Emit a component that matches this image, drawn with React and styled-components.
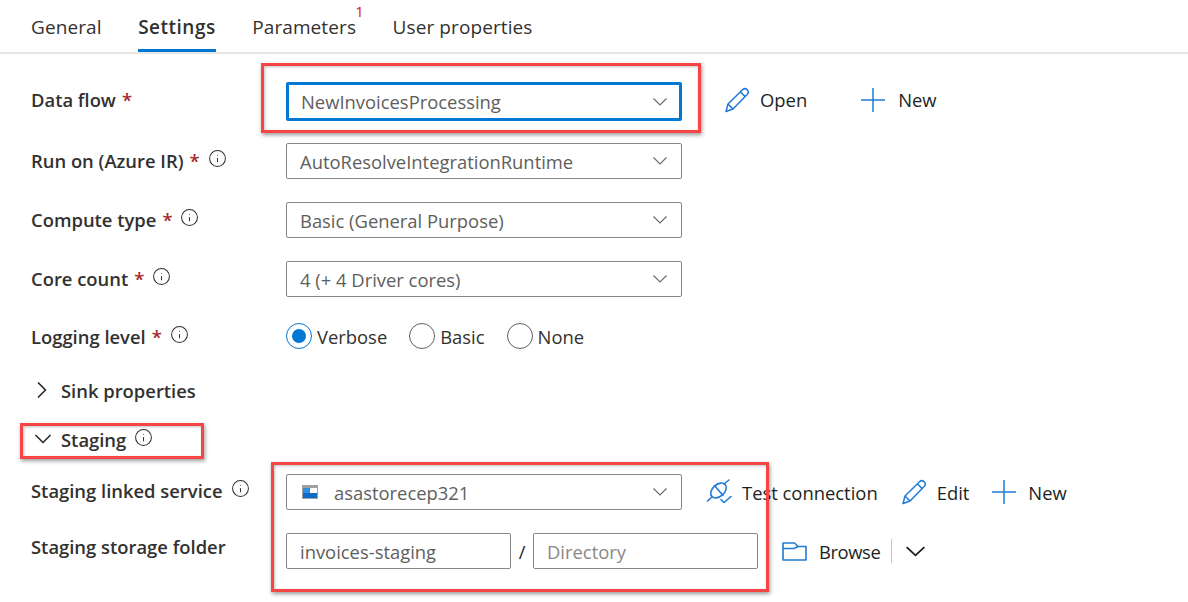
import React from 'react';
import styled, { createGlobalStyle } from 'styled-components';
import { Info } from 'lucide-react';

const GlobalStyle = createGlobalStyle`
    html, body { margin: 0; padding: 0; background: #fff; }
    body { font-family: "Open Sans", "Noto Sans", "Liberation Sans", sans-serif; }
`

const Page = styled.div`
    position: relative;
    width: 1188px;
    height: 602px;
    overflow: hidden;
    color: #323130;
    font-size: 18.4px;
`

const Tabs = styled.div`
    display: flex;
    padding-left: 31px;
    gap: 36.5px;
    border-bottom: 2px solid #e6e6e6;
    font-size: 19px;
`

const Tab = styled.div`
    position: relative;
    box-sizing: border-box;
    height: 52px;
    margin-bottom: ${props => props.active ? -1 : 0}px;
    line-height: 55px;
    font-weight: ${props => props.active ? 600 : 400};
    letter-spacing: ${props => props.active ? '0.5px' : '0.1px'};
    border-bottom: ${props => props.active ? '3px solid #0078d4' : 'none'};
`

const Badge = styled.span`
    position: absolute;
    top: -16px;
    right: -8px;
    font-size: 15px;
    color: #e00b1c;
`

const Form = styled.div`
    padding: 28px 0 0 31px;
`

const Row = styled.div`
    display: flex;
    align-items: center;
    height: ${props => props.h || 36}px;
    margin-bottom: ${props => props.mb ?? 23}px;
`

const Label = styled.div`
    display: flex;
    align-items: center;
    width: 255px;
    flex: none;
    font-weight: 600;
    margin-top: ${props => props.shift ?? -1}px;
`

const Star = styled.span`
    color: #a4262c;
    margin-left: 6px;
`

const InfoIcon = styled(Info)`
    width: 19px;
    height: 19px;
    margin: -4px 0 0 8px;
    color: #323130;
    stroke-width: 1.3;
`

const Select = styled.div`
    display: flex;
    align-items: center;
    box-sizing: border-box;
    width: 396px;
    height: ${props => props.focus ? 39 : 36}px;
    padding: 0 ${props => props.focus ? 12 : 14}px 0 ${props => props.focus ? 12 : 13}px;
    border: ${props => props.focus ? '3px solid #0078d4' : '1px solid #8a8886'};
    border-radius: 2px;
    color: #605e5c;
`

const SelectText = styled.span`
    flex: 1;
    margin-left: ${props => props.indent || 0}px;
`

const Actions = styled.div`
    display: flex;
    align-items: center;
    margin-left: ${props => props.ml || 42}px;
    margin-top: ${props => props.up || 0}px;
    gap: ${props => props.gap ?? 54}px;
`

const Action = styled.div`
    display: flex;
    align-items: center;
    gap: ${props => props.gap || 11}px;
    color: #201f1e;
`

const Radios = styled.div`
    display: flex;
    align-items: center;
    gap: 22px;
    margin-top: 1px;
`

const Radio = styled.div`
    display: flex;
    align-items: center;
    gap: 5px;
`

const Dot = styled.span`
    box-sizing: border-box;
    width: 26px;
    height: 26px;
    margin-top: -2px;
    border-radius: 50%;
    border: 1px solid ${props => props.on ? '#0078d4' : '#605e5c'};
    padding: 5px;
    background: ${props => props.on ? '#0078d4' : 'transparent'};
    background-clip: content-box;
`

const Section = styled.div`
    display: flex;
    align-items: center;
    height: 30px;
    margin-bottom: ${props => props.mb}px;
    font-weight: 600;
`

const SectionIcon = styled.span`
    display: flex;
    width: 30px;
    padding-left: ${props => props.pad || 0}px;
    box-sizing: border-box;
`

const Field = styled.div`
    box-sizing: border-box;
    display: flex;
    align-items: center;
    width: ${props => props.w}px;
    height: 36px;
    padding-left: 13px;
    border: 1px solid #8a8886;
    border-radius: 2px;
    color: ${props => props.muted ? '#8a8886' : '#605e5c'};
`

const Slash = styled.span`
    width: 22px;
    text-align: center;
    color: #201f1e;
`

const BrowseText = styled.span`
    letter-spacing: -0.4px;
`

const Divider = styled.span`
    width: 1px;
    height: 24px;
    background: #c8c6c4;
    margin: 0 14px 0 11px;
`

const Fields = styled.div`
    display: flex;
    align-items: center;
`

const StorageMark = styled.svg`
    margin-left: 2px;
`

const Mark = styled.div`
    position: absolute;
    box-sizing: border-box;
    left: ${props => props.x}px;
    top: ${props => props.y}px;
    width: ${props => props.w}px;
    height: ${props => props.h}px;
    border: 3px solid #f84444;
    box-shadow: 1px 2px 4px rgba(0, 0, 0, 0.4), inset 1px 1px 3px rgba(0, 0, 0, 0.25);
    pointer-events: none;
`

const Pencil = () => (
    <svg width="26" height="26" viewBox="0 0 26 26" fill="none" stroke="#1f7ad6" strokeWidth="1.5" strokeLinejoin="round">
        <path d="M2 24.5 L4 17 L18.5 2.8 C20 1.4 21.8 1.4 23.2 2.8 C24.6 4.2 24.6 6 23.2 7.5 L9 22 Z" />
        <path d="M4 17 L9 22 M16.5 5 L21.2 9.6" />
    </svg>
)

const PlusIcon = () => (
    <svg width="24" height="24" viewBox="0 0 24 24" stroke="#1f7ad6" strokeWidth="1.5">
        <path d="M0 12 H24 M12 0 V24" />
    </svg>
)

const Plug = () => (
    <svg width="26" height="26" viewBox="0 0 26 26" fill="none" stroke="#1f7ad6" strokeWidth="1.6" strokeLinecap="round" strokeLinejoin="round">
        <path d="M1.5 22 L6.5 17.5 M18 5 L23 1" />
        <ellipse cx="12.5" cy="11.5" rx="9" ry="6" transform="rotate(-42 12.5 11.5)" />
        <path d="M8.5 6.5 L17 16.5" />
        <path d="M15 20.5 L18 23.5 L25 17.5" />
    </svg>
)

const Folder = () => (
    <svg width="25" height="19" viewBox="0 0 25 19" fill="none" stroke="#1f7ad6" strokeWidth="1.6" strokeLinejoin="round">
        <path d="M1 18 V1 H12.5 L16 4.5 H24 V18 Z" />
        <path d="M1 6.5 H12 L16 4.5" />
    </svg>
)

const Storage = () => (
    <StorageMark width="16" height="14" viewBox="0 0 16 14">
        <rect width="16" height="14" fill="#a0a1a2" />
        <rect x="1" y="3" width="14" height="10" fill="#fff" />
        <rect x="1" y="3" width="7" height="5" fill="#2f8fdc" />
        <rect x="1" y="8" width="14" height="5" fill="#0f6cc4" />
    </StorageMark>
)

const Caret = () => (
    <svg width="14" height="8" viewBox="0 0 14 8" fill="none" stroke="#6f6d6b" strokeWidth="1.2">
        <path d="M0.5 0.5 L7 7 L13.5 0.5" />
    </svg>
)

const ChevronOpen = ({ w = 16, h = 10 }) => (
    <svg width={w} height={h} viewBox="0 0 16 10" fill="none" stroke="#201f1e" strokeWidth="1.5" preserveAspectRatio="none">
        <path d="M0.5 1 L8 8.5 L15.5 1" />
    </svg>
)

const ChevronClosed = () => (
    <svg width="10" height="16" viewBox="0 0 10 16" fill="none" stroke="#201f1e" strokeWidth="1.5">
        <path d="M1 0.5 L8.5 8 L1 15.5" />
    </svg>
)

const App = () => {
    const selects = [
        { label: 'Run on (Azure IR)', value: 'AutoResolveIntegrationRuntime', mb: 23 },
        { label: 'Compute type', value: 'Basic (General Purpose)', mb: 23 },
        { label: 'Core count', value: '4 (+ 4 Driver cores)', mb: 21 },
    ]

    return (
        <>
            <GlobalStyle />
            <Page>
                <Tabs>
                    <Tab>General</Tab>
                    <Tab active>Settings</Tab>
                    <Tab>Parameters<Badge>1</Badge></Tab>
                    <Tab>User properties</Tab>
                </Tabs>
                <Form>
                    <Row h={39} mb={22}>
                        <Label shift={-5}>Data flow<Star>*</Star></Label>
                        <Select focus>
                            <SelectText>NewInvoicesProcessing</SelectText>
                            <Caret />
                        </Select>
                        <Actions up={-4}>
                            <Action gap={10}><Pencil />Open</Action>
                            <Action gap={13}><PlusIcon />New</Action>
                        </Actions>
                    </Row>
                    {selects.map(item => (
                        <Row key={item.label} mb={item.mb}>
                            <Label>{item.label}<Star>*</Star><InfoIcon /></Label>
                            <Select>
                                <SelectText>{item.value}</SelectText>
                                <Caret />
                            </Select>
                        </Row>
                    ))}
                    <Row mb={21}>
                        <Label shift={0}>Logging level<Star>*</Star><InfoIcon /></Label>
                        <Radios>
                            <Radio><Dot on />Verbose</Radio>
                            <Radio><Dot />Basic</Radio>
                            <Radio><Dot />None</Radio>
                        </Radios>
                    </Row>
                    <Section mb={19}>
                        <SectionIcon pad={6}><ChevronClosed /></SectionIcon>
                        Sink properties
                    </Section>
                    <Section mb={20}>
                        <SectionIcon pad={4}><ChevronOpen /></SectionIcon>
                        Staging<InfoIcon />
                    </Section>
                    <Row mb={23}>
                        <Label shift={-3}>Staging linked service<InfoIcon /></Label>
                        <Select>
                            <Storage />
                            <SelectText indent={16}>asastorecep321</SelectText>
                            <Caret />
                        </Select>
                        <Actions ml={24} gap={23}>
                            <Action gap={10}><Plug />Test connection</Action>
                            <Action gap={10}><Pencil />Edit</Action>
                            <Action gap={12}><PlusIcon />New</Action>
                        </Actions>
                    </Row>
                    <Row>
                        <Label shift={-9}>Staging storage folder</Label>
                        <Fields>
                            <Field w={225}>invoices-staging</Field>
                            <Slash>/</Slash>
                            <Field w={225} muted>Directory</Field>
                        </Fields>
                        <Actions ml={24} gap={0}>
                            <Action gap={12}><Folder /><BrowseText>Browse</BrowseText></Action>
                            <Divider />
                            <ChevronOpen w={19} h={11} />
                        </Actions>
                    </Row>
                </Form>
                <Mark x={261} y={63} w={440} h={70} />
                <Mark x={20} y={423} w={184} h={36} />
                <Mark x={271} y={462} w={498} h={130} />
            </Page>
        </>
    )
}

export default App;
